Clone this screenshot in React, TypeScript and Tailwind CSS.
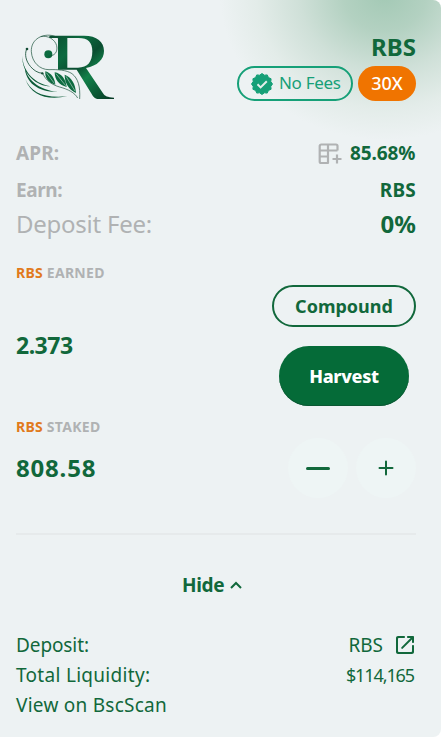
import React from 'react';

// Inlined SVGs to remove external dependencies
const LogoIcon = (props: React.SVGProps<SVGSVGElement>) => (
  <svg xmlns="http://www.w3.org/2000/svg" viewBox="48 36 300 210" fill="none" {...props}>
    <defs>
      <linearGradient id="logo-green" x1="160" y1="50" x2="330" y2="240" gradientUnits="userSpaceOnUse">
        <stop offset="0" stopColor="#0b5132" />
        <stop offset="0.25" stopColor="#0c6b3f" />
        <stop offset="0.45" stopColor="#0a4d30" />
        <stop offset="0.62" stopColor="#128049" />
        <stop offset="1" stopColor="#063b25" />
      </linearGradient>
    </defs>
    <path fill="url(#logo-green)" fillRule="evenodd" d="M148 47H252C291 47 312 65 312 93C312 119 292 137 258 144L309 220C315 229 322 232 342 233V237H297C285 237 281 232 275 222L230 149H174V54H148ZM202 54V143H234C263 143 277 126 277 94C277 67 264 54 236 54Z" />
    <circle cx="145" cy="103" r="12" fill="#0c6b3f" />
    <path stroke="#134d35" strokeWidth="2" d="M174 54C160 44 139 43 122 50C101 59 93 77 94 95C96 127 119 149 147 149C171 148 200 150 216 161C235 176 241 200 239 237M122 50C143 45 165 58 170 77C174 97 163 108 145 109" />
    <path stroke="#134d35" strokeWidth="2.5" d="M80 87C73 104 78 123 91 139C101 151 113 159 128 160" />
    <circle cx="81" cy="87" r="4" fill="#134d35" />
    <circle cx="127" cy="160" r="3.5" fill="#134d35" />
    <path fill="#0c5c38" d="M67 107C68 147 95 188 151 199C112 199 65 163 67 107ZM74 139C80 178 113 209 173 216C116 217 76 190 74 139ZM76 177C92 216 130 236 202 229C143 241 94 229 76 177Z" />
    <path fill="#0c6b3f" d="M136 154C154 159 165 176 166 194C145 189 134 173 136 154ZM164 157C184 160 198 178 200 201C178 196 164 179 164 157ZM194 164C216 173 226 192 228 219C205 207 194 188 194 164Z" />
    <path stroke="#edf2f3" strokeWidth="1.5" d="M139 158L163 190M168 161L197 197M198 169L225 213" />
    <path stroke="#134d35" strokeWidth="2" d="M128 160C139 184 158 195 179 201C205 208 224 218 233 234" />
  </svg>
);
const VerifiedIcon = (props: React.SVGProps<SVGSVGElement>) => (
  <svg xmlns="http://www.w3.org/2000/svg" viewBox="0 0 24 24" fill="none" {...props}>
    <path fill="currentColor" stroke="currentColor" strokeWidth={1} strokeLinejoin="round" d="M12 1.500L14.400 3.200L17.250 2.900L18.450 5.550L21.100 6.750L20.800 9.600L22.500 12L20.800 14.400L21.100 17.250L18.450 18.450L17.250 21.100L14.400 20.800L12 22.500L9.600 20.800L6.750 21.100L5.550 18.450L2.900 17.250L3.200 14.400L1.500 12L3.200 9.600L2.900 6.750L5.550 5.550L6.750 2.900L9.600 3.200Z" />
    <path stroke="#e4efeb" strokeWidth={2} d="M7.500 12.300l3.100 3.100L16.800 9.200" />
  </svg>
);
const TableAddIcon = (props: React.SVGProps<SVGSVGElement>) => (
  <svg xmlns="http://www.w3.org/2000/svg" viewBox="0 0 24 22" fill="none" stroke="currentColor" strokeWidth={2.2} {...props}>
    <path strokeLinejoin="round" d="M19.500 7.500V3a1.500 1.500 0 0 0-1.500-1.500H3.200A1.500 1.500 0 0 0 1.700 3v15.500A1.500 1.500 0 0 0 3.200 20H10V1.500M1.700 7.500h17.800M1.700 13.500h8.300" />
    <path d="M19 11.500v9M14.500 16H23.500" />
  </svg>
);
const ChevronUpIcon = (props: React.SVGProps<SVGSVGElement>) => (
  <svg xmlns="http://www.w3.org/2000/svg" viewBox="0 0 12 8" fill="none" stroke="currentColor" strokeWidth={2} {...props}>
    <path d="M1 7l5-5 5 5" />
  </svg>
);
const OpenNewIcon = (props: React.SVGProps<SVGSVGElement>) => (
  <svg xmlns="http://www.w3.org/2000/svg" viewBox="3 3 18 18" fill="currentColor" {...props}>
    <path d="M18 19H6c-.55 0-1-.45-1-1V6c0-.55.45-1 1-1h5c.55 0 1-.45 1-1s-.45-1-1-1H5c-1.110 0-2 .9-2 2v14c0 1.100.9 2 2 2h14c1.100 0 2-.9 2-2v-6c0-.55-.45-1-1-1s-1 .45-1 1v5c0 .55-.45 1-1 1zM14 4c0 .55.45 1 1 1h2.590l-9.130 9.130a.996.996 0 1 0 1.410 1.410L19 6.410V9c0 .55.45 1 1 1s1-.45 1-1V4c0-.55-.45-1-1-1h-5c-.55 0-1 .45-1 1z" />
  </svg>
);

interface LabelProps {
    action: string;
}

const TokenLabel: React.FC<LabelProps> = ({ action }) => (
    <p className="h-5 text-sm leading-5 font-bold text-[#b0b2b3]">
        <span className="tracking-[0.3px] text-[#e17a1c]">RBS</span> <span className="tracking-[0.3px]">{action}</span>
    </p>
);

const App: React.FC = () => {
    return (
        <div className="relative h-[737px] w-[441px] overflow-hidden rounded-r-lg bg-[#edf2f3] bg-[radial-gradient(ellipse_165px_145px_at_385px_-5px,#a3c9b5_0%,#b3d1c1_25%,#cfe0d8_52%,#e3ece9_78%,#edf2f3_100%)] pr-[25px] pl-4 font-['Noto_Sans',sans-serif] text-[#11683b]">
            <div className="flex justify-between pt-8">
                <LogoIcon className="h-[70px] w-[100px]" />
                <div className="flex flex-col items-end">
                    <h2 className="h-[30px] text-2xl leading-[29px] font-bold">RBS</h2>
                    <div className="mt-1 flex gap-[5px]">
                        <div className="flex h-[35px] w-[116px] items-center rounded-full border-2 border-[#16a078] pl-[11px] text-[#16a078]">
                            <VerifiedIcon className="mr-[5px] h-6 w-6 shrink-0" />
                            <span className="pb-px text-[17px] tracking-[-0.3px] whitespace-nowrap">No Fees</span>
                        </div>
                        <div className="flex h-[35px] w-[58px] items-center justify-center rounded-full bg-[#f07400] pb-px text-lg font-medium text-white">30X</div>
                    </div>
                </div>
            </div>

            <div className="mt-[33px]">
                <div className="flex h-[37px] items-center justify-between text-[19px] font-bold">
                    <span className="tracking-[0.1px] text-[#b0b2b3]">APR:</span>
                    <span className="flex items-center">
                        <TableAddIcon className="mr-2 h-[22px] w-6 text-[#b0b2b3]" />
                        <span className="-mr-px w-[67px] tracking-[-0.1px]">85.68%</span>
                    </span>
                </div>
                <div className="flex h-9 items-center justify-between text-[19px] font-bold">
                    <span className="tracking-[-0.4px] text-[#b0b2b3]">Earn:</span>
                    <span className="tracking-[0.2px]">RBS</span>
                </div>
                <div className="flex h-8 items-center justify-between pb-px text-2xl">
                    <span className="tracking-[-0.25px] text-[#b0b2b3]">Deposit Fee:</span>
                    <span className="font-bold">0%</span>
                </div>
            </div>

            <div className="mt-[23px]">
                <TokenLabel action="EARNED" />
                <div className="mt-0.5 flex h-[121px] items-center justify-between">
                    <span className="pb-px text-[23px] font-bold tracking-[-0.5px]">2.373</span>
                    <div className="flex w-36 flex-col items-center gap-[19px]">
                        <button type="button" className="h-[42px] w-36 rounded-full border-2 border-[#11683b] pb-px text-lg font-bold">Compound</button>
                        <button type="button" className="h-[60px] w-[130px] rounded-full bg-[#056b38] pb-px text-lg font-extrabold tracking-[-0.3px] text-white shadow-[inset_0_-1px_0_#0b5733]">Harvest</button>
                    </div>
                </div>
            </div>

            <div className="mt-[11px]">
                <TokenLabel action="STAKED" />
                <div className="mt-px flex h-[60px] items-center justify-between">
                    <span className="text-2xl font-bold tracking-[0.8px]">808.58</span>
                    <div className="flex gap-2">
                        <button type="button" className="flex h-[60px] w-[60px] items-center justify-center rounded-full bg-[#eef5f5]">
                            <span className="h-[3px] w-6 rounded-full bg-[#11683b]" />
                        </button>
                        <button type="button" className="flex h-[60px] w-[60px] items-center justify-center rounded-full bg-[#eef5f5]">
                            <svg viewBox="0 0 16 16" className="h-4 w-4" fill="none" stroke="currentColor" strokeWidth={2} strokeLinecap="round">
                                <path d="M8 1.500v13M1.500 8h13" />
                            </svg>
                        </button>
                    </div>
                </div>
            </div>

            <div className="mt-[35px] h-0.5 bg-[#e6eaeb]" />

            <button type="button" className="mt-[30px] ml-[166px] flex h-10 items-center text-[19px] font-bold">
                <span className="tracking-[-0.3px]">Hide</span>
                <ChevronUpIcon className="ml-1.5 h-2 w-3" />
            </button>

            <div className="mt-[25px] text-[19px] leading-[30px]">
                <div className="flex h-[30px] items-center justify-between">
                    <span className="tracking-[-0.1px]">Deposit:</span>
                    <span className="flex items-center">
                        <span>RBS</span>
                        <OpenNewIcon className="mr-0.5 ml-[13px] h-[18px] w-[18px]" />
                    </span>
                </div>
                <div className="flex h-[30px] items-center justify-between">
                    <span className="tracking-[0.3px]">Total Liquidity:</span>
                    <span className="pr-0.5 text-lg tracking-[-1.1px]">$114,165</span>
                </div>
                <a className="block h-[30px] tracking-[0.25px]">View on BscScan</a>
            </div>
        </div>
    );
};

export default App;
